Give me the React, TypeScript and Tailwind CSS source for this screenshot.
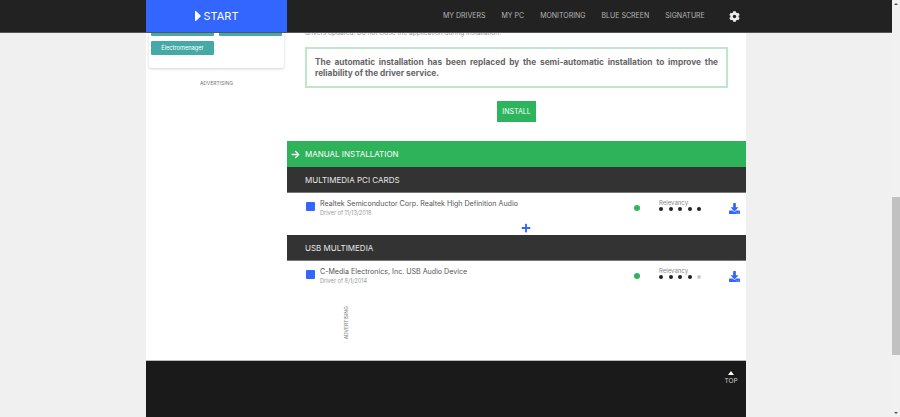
import { FaCog, FaArrowRight, FaPlus, FaDownload } from 'react-icons/fa'

// ===========================================
// Driver page
// ===========================================
const navItems = ['MY DRIVERS', 'MY PC', 'MONITORING', 'BLUE SCREEN', 'SIGNATURE']

function SectionBar({ label }: { label: string }) {
  return (
    <div className="h-[26px] bg-[#333333] border-b border-[#777777] flex items-center pl-[18px] text-[8px] text-[#e6e6e6]">
      {label}
    </div>
  )
}

function DriverRow({ name, date, score }: { name: string; date: string; score: number }) {
  return (
    <div className="flex h-[30px] items-start pl-[19px] pt-[6px]">
      <div className="w-[9px] h-[9px] mt-[3px] rounded-[1px] bg-[#3366ff]" />
      <div className="ml-[5px] w-[314px]">
        <div className="text-[7.1px] leading-[10px] text-[#555555]">{name}</div>
        <div className="text-[5.6px] leading-[9px] text-[#999999]">{date}</div>
      </div>
      <div className="w-[6px] h-[6px] mt-[6px] rounded-full bg-[#2db55d]" />
      <div className="ml-[19px] w-[70px]">
        <div className="text-[6px] leading-[7px] text-[#888888]">Relevancy</div>
        <div className="flex gap-[5.5px] mt-[1px]">
          {[1, 2, 3, 4, 5].map((n) => (
            <div
              key={n}
              className={n <= score ? 'w-[4px] h-[4px] rounded-full bg-[#222222]' : 'w-[4px] h-[4px] rounded-full bg-[#cccccc]'}
            />
          ))}
        </div>
      </div>
      <FaDownload className="mt-[4px] text-[#3366ff] w-[11px] h-[11px]" />
    </div>
  )
}

export default function App() {
  return (
    <div className="h-[417px] w-[900px] flex overflow-hidden bg-[#f0f0f0] font-['Inter',sans-serif]">
      <div className="w-[892px] flex flex-col">
        {/* Header */}
        <header className="relative z-10 h-[33px] shrink-0 bg-[#222222] border-b border-[#555555] flex pl-[146px]">
          <div className="w-[141px] h-[32px] bg-[#3366ff] flex items-center justify-center gap-[3px] text-white text-[11px]">
            <svg width="6" height="10" viewBox="0 0 6 10" fill="currentColor">
              <path d="M0 0 L1 0 L6 5 L1 10 L0 10 Z" />
            </svg>
            <span>START</span>
          </div>
          <nav className="ml-[156px] flex items-center gap-[16px] text-[7px] text-[#b5b5b5]">
            {navItems.map((item) => (
              <span key={item}>{item}</span>
            ))}
          </nav>
          <div className="ml-[24px] flex items-center">
            <FaCog className="w-[11px] h-[11px] text-[#eeeeee]" />
          </div>
        </header>

        {/* Body */}
        <div className="w-[600px] ml-[146px] flex-1 bg-white flex flex-col min-h-0">
          <div className="flex h-[327px]">
            {/* Left column */}
            <aside className="w-[141px] shrink-0 pl-[3px] pr-[3px]">
              <div className="h-[35px] rounded-b-[2px] bg-white shadow-[0_1px_3px_rgba(0,0,0,0.18)] px-[2px]">
                <div className="flex gap-[5px]">
                  <div className="w-[63px] h-[3px] rounded-b-[1px] bg-[#45aaa5]" />
                  <div className="w-[63px] h-[3px] rounded-b-[1px] bg-[#45aaa5]" />
                </div>
                <div className="w-[63px] h-[14px] mt-[5px] rounded-[1px] bg-[#45aaa5] text-white text-[5.7px] flex items-center justify-center">
                  Électromenager
                </div>
              </div>
              <div className="mt-[12px] text-center text-[5px] leading-[6px] text-[#777777]">ADVERTISING</div>
            </aside>

            {/* Right column */}
            <main className="flex-1 min-w-0">
              <div className="pl-[18px] pr-[18px]">
                <div className="h-[5px] overflow-hidden">
                  <p className="-mt-[4px] text-[6.5px] leading-[9px] text-[#999999] whitespace-nowrap">
                    drivers updated. Do not close the application during installation.
                  </p>
                </div>
                <div className="mt-[9px] w-[423px] h-[41px] border-2 border-[#bfe6cb] px-[8px] pt-[8px]">
                  <p className="text-[8.3px] leading-[11px] font-bold text-[#666666] text-justify">
                    The automatic installation has been replaced by the semi-automatic installation to improve the reliability of the driver service.
                  </p>
                </div>
                <div className="mt-[13px] flex justify-center">
                  <div className="w-[39px] h-[21px] pt-[1px] bg-[#2db55d] flex items-center justify-center text-white text-[7px]">
                    INSTALL
                  </div>
                </div>
              </div>

              <div className="mt-[19px] h-[26px] bg-[#2eb35a] flex items-center pl-[4px] text-[8px] text-white">
                <FaArrowRight className="w-[9px] h-[9px]" />
                <span className="ml-[5px]">MANUAL INSTALLATION</span>
              </div>
              <SectionBar label="MULTIMEDIA PCI CARDS" />
              <DriverRow name="Realtek Semiconductor Corp. Realtek High Definition Audio" date="Driver of 11/13/2018" score={5} />
              <div className="h-[12px] flex justify-center pl-[19px]">
                <FaPlus className="w-[10px] h-[10px] text-[#3366ff]" />
              </div>
              <SectionBar label="USB MULTIMEDIA" />
              <DriverRow name="C-Media Electronics, Inc. USB Audio Device" date="Driver of 8/1/2014" score={4} />
              <div className="mt-[15px] pl-[57px]">
                <div className="w-[6px] h-[34px] flex items-center justify-center">
                  <span className="-rotate-90 text-[5px] whitespace-nowrap text-[#777777]">ADVERTISING</span>
                </div>
              </div>
            </main>
          </div>

          {/* Footer */}
          <footer className="flex-1 bg-[#1a1a1a] border-t border-[#bbbbbb] flex justify-end pr-[8px] pt-[10px]">
            <div className="flex flex-col items-center w-[14px] text-white">
              <div className="w-0 h-0 border-x-[3px] border-x-transparent border-b-[4px] border-b-white" />
              <span className="mt-[2px] text-[6.5px] text-[#cfcfcf]">TOP</span>
            </div>
          </footer>
        </div>
      </div>

      {/* Scrollbar */}
      <div className="w-[8px] shrink-0 bg-[#f1f1f1] flex flex-col items-center">
        <div className="mt-[3px] w-0 h-0 border-x-[2px] border-x-transparent border-b-[2px] border-b-[#505050]" />
        <div className="w-full h-[158px] mt-[192px] bg-[#c1c1c1]" />
        <div className="mt-auto mb-[3px] w-0 h-0 border-x-[2px] border-x-transparent border-t-[2px] border-t-[#505050]" />
      </div>
    </div>
  )
}
